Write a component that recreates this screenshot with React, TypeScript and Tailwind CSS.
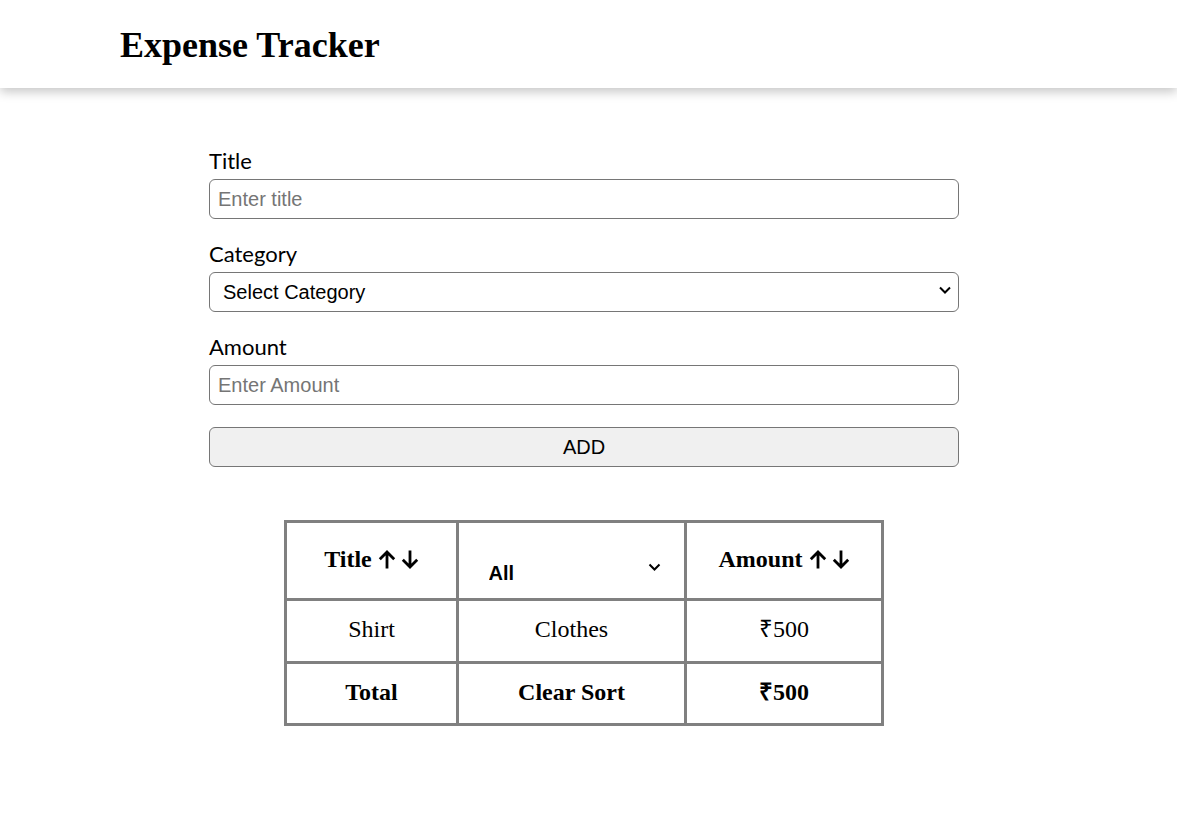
import React from 'react';

const serif = "font-['Liberation_Serif','Times_New_Roman',serif]";
const sans = "font-['Liberation_Sans',Arial,sans-serif]";
const label = "block text-[22px] leading-[22px] text-black font-['Lato','Noto_Sans',sans-serif]";
const field =
  "mt-[7px] h-[40px] w-full rounded-[6px] border border-[#767676] bg-white px-2 text-[20px] text-black outline-none placeholder:text-[#757575] font-['Liberation_Sans',Arial,sans-serif]";
const cell = 'border-[3px] border-[#808080] pb-[4px] text-center';

const Chevron = ({ className }: { className?: string }) => (
  <svg viewBox="0 0 12 8" className={className} fill="none" stroke="currentColor" strokeWidth="2">
    <path d="M1 1.5l5 5 5-5" />
  </svg>
);

const SortArrows = () => (
  <span className="ml-[6px] inline-flex items-center gap-[5px] align-[-2px]">
    <svg viewBox="0 0 18 19" className="h-[19px] w-[18px]" fill="none" stroke="currentColor" strokeWidth="2.8">
      <path d="M9 18.5V2M1.8 9.2L9 2l7.2 7.2" />
    </svg>
    <svg viewBox="0 0 18 19" className="h-[19px] w-[18px]" fill="none" stroke="currentColor" strokeWidth="2.8">
      <path d="M9 0.5V17M1.8 9.8L9 17l7.2-7.2" />
    </svg>
  </span>
);

export default function App() {
  return (
    <div className="min-h-screen bg-white text-black">
      <header className="flex h-[88px] items-center px-[120px] pt-[2px] shadow-[0_4px_10px_rgba(0,0,0,0.22)]">
        <h1 className={`${serif} text-[36px] font-bold leading-none`}>Expense Tracker</h1>
      </header>

      <main className="ml-[209px] w-[750px] pt-[62px]">
        <form className="flex flex-col gap-[24px]" onSubmit={(e) => e.preventDefault()}>
          <div>
            <label className={label}>Title</label>
            <input className={field} placeholder="Enter title" />
          </div>
          <div>
            <label className={label}>Category</label>
            <div className="relative">
              <select className={`${field} appearance-none pl-[13px]`} defaultValue="">
                <option value="">Select Category</option>
                <option>Grocery</option>
                <option>Clothes</option>
                <option>Bills</option>
              </select>
              <Chevron className="pointer-events-none absolute right-[8px] top-[21px] h-[8px] w-[12px]" />
            </div>
          </div>
          <div>
            <label className={label}>Amount</label>
            <input className={field} placeholder="Enter Amount" />
          </div>
        </form>
        <button
          className={`${sans} mt-[22px] h-[40px] w-full rounded-[6px] border border-[#767676] bg-[#f0f0f0] text-[20px]`}
        >
          ADD
        </button>

        <table className={`${serif} mx-auto mt-[53px] w-[597px] table-fixed border-collapse border-[3px] border-[#808080] text-[24px]`}>
          <colgroup>
            <col className="w-[172px]" />
            <col className="w-[228px]" />
            <col className="w-[197px]" />
          </colgroup>
          <thead>
            <tr className="h-[78px]">
              <th className={`${cell} font-bold`}>
                Title<SortArrows />
              </th>
              <th className="border-[3px] border-[#808080]">
                <div className="relative mx-auto mt-[22px] w-[196px]">
                  <select className={`${sans} w-full appearance-none bg-transparent pl-[15px] text-[20px] font-bold outline-none`} defaultValue="All">
                    <option>All</option>
                    <option>Grocery</option>
                    <option>Clothes</option>
                    <option>Bills</option>
                  </select>
                  <Chevron className="pointer-events-none absolute right-[9px] top-[9px] h-[8px] w-[13px]" />
                </div>
              </th>
              <th className={`${cell} font-bold`}>
                Amount<SortArrows />
              </th>
            </tr>
          </thead>
          <tbody>
            <tr className="h-[63px]">
              <td className={cell}>Shirt</td>
              <td className={cell}>Clothes</td>
              <td className={cell}>₹500</td>
            </tr>
            <tr className="h-[62px]">
              <th className={`${cell} font-bold`}>Total</th>
              <th className={`${cell} font-bold`}>Clear Sort</th>
              <th className={`${cell} font-bold`}>₹500</th>
            </tr>
          </tbody>
        </table>
      </main>
    </div>
  );
}
